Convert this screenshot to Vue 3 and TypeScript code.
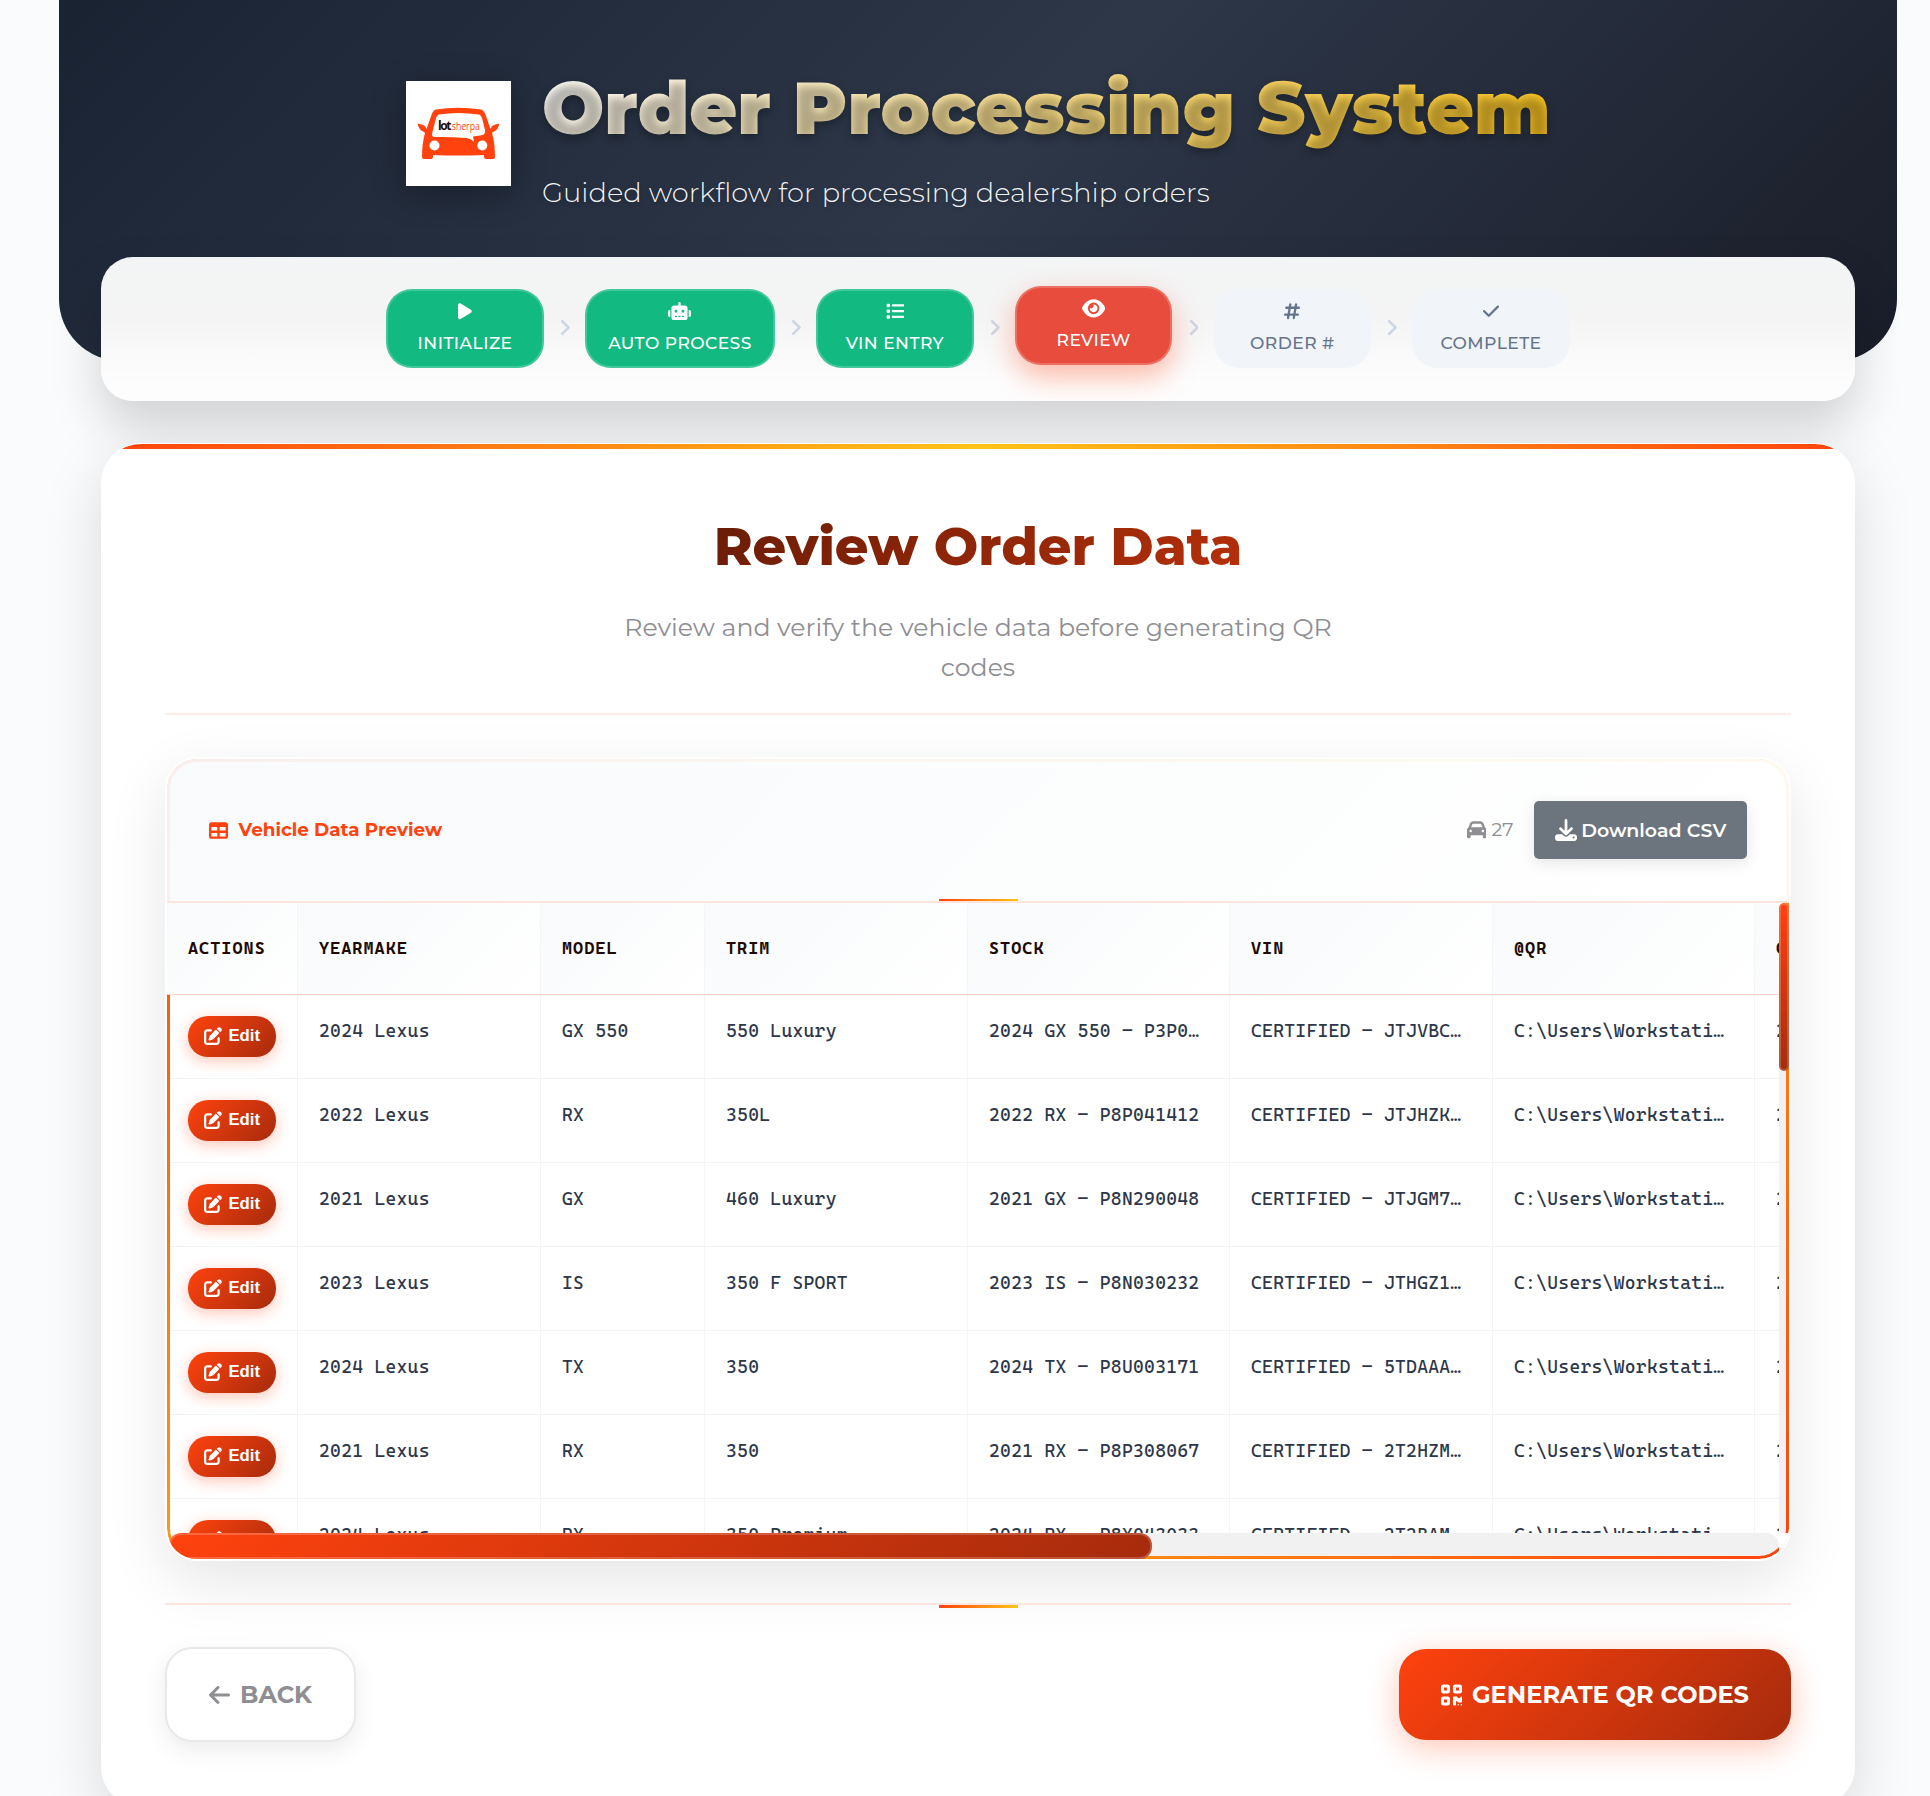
<script setup lang="ts">
interface Icon { w: number; d: string }
interface Step { label: string; icon: string; state: 'done' | 'active' | 'todo' }

const icons: Record<string, Icon> = {
  play: { w: 384, d: 'M73 39c-14.8-9.1-33.4-9.4-48.5-.9S0 62.6 0 80L0 432c0 17.4 9.4 33.4 24.5 41.9s33.7 8.1 48.5-.9L361 297c14.3-8.7 23-24.2 23-41s-8.7-32.2-23-41L73 39z' },
  robot: { w: 640, d: 'M320 0c17.7 0 32 14.3 32 32l0 64 120 0c39.8 0 72 32.2 72 72l0 272c0 39.8-32.2 72-72 72l-304 0c-39.8 0-72-32.2-72-72l0-272c0-39.8 32.2-72 72-72l120 0 0-64c0-17.7 14.3-32 32-32zM208 384c-8.8 0-16 7.2-16 16s7.2 16 16 16l32 0c8.8 0 16-7.2 16-16s-7.2-16-16-16l-32 0zm96 0c-8.8 0-16 7.2-16 16s7.2 16 16 16l32 0c8.8 0 16-7.2 16-16s-7.2-16-16-16l-32 0zm96 0c-8.8 0-16 7.2-16 16s7.2 16 16 16l32 0c8.8 0 16-7.2 16-16s-7.2-16-16-16l-32 0zM264 256a40 40 0 1 0 -80 0 40 40 0 1 0 80 0zm152 40a40 40 0 1 0 0-80 40 40 0 1 0 0 80zM48 224l16 0 0 192-16 0c-26.5 0-48-21.5-48-48l0-96c0-26.5 21.5-48 48-48zm544 0c26.5 0 48 21.5 48 48l0 96c0 26.5-21.5 48-48 48l-16 0 0-192 16 0z' },
  list: { w: 512, d: 'M40 48C26.7 48 16 58.7 16 72l0 48c0 13.3 10.7 24 24 24l48 0c13.3 0 24-10.7 24-24l0-48c0-13.3-10.7-24-24-24L40 48zM192 64c-17.7 0-32 14.3-32 32s14.3 32 32 32l288 0c17.7 0 32-14.3 32-32s-14.3-32-32-32L192 64zm0 160c-17.7 0-32 14.3-32 32s14.3 32 32 32l288 0c17.7 0 32-14.3 32-32s-14.3-32-32-32l-288 0zm0 160c-17.7 0-32 14.3-32 32s14.3 32 32 32l288 0c17.7 0 32-14.3 32-32s-14.3-32-32-32l-288 0zM16 232l0 48c0 13.3 10.7 24 24 24l48 0c13.3 0 24-10.7 24-24l0-48c0-13.3-10.7-24-24-24l-48 0c-13.3 0-24 10.7-24 24zM40 368c-13.3 0-24 10.7-24 24l0 48c0 13.3 10.7 24 24 24l48 0c13.3 0 24-10.7 24-24l0-48c0-13.3-10.7-24-24-24l-48 0z' },
  eye: { w: 576, d: 'M288 32c-80.8 0-145.5 36.8-192.6 80.6C48.6 156 17.3 208 2.5 243.7c-3.3 7.9-3.3 16.7 0 24.6C17.3 304 48.6 356 95.4 399.4C142.5 443.2 207.2 480 288 480s145.5-36.8 192.6-80.6c46.8-43.5 78.1-95.4 93-131.1c3.3-7.9 3.3-16.7 0-24.6c-14.9-35.7-46.2-87.7-93-131.1C433.5 68.8 368.8 32 288 32zM144 256a144 144 0 1 1 288 0 144 144 0 1 1 -288 0zm144-64c0 35.3-28.7 64-64 64c-7.1 0-13.9-1.2-20.3-3.3c-5.5-1.8-11.9 1.6-11.7 7.4c.3 6.9 1.3 13.8 3.2 20.7c13.7 51.2 66.4 81.6 117.6 67.9s81.6-66.4 67.9-117.6c-11.1-41.5-47.8-69.4-88.6-71.1c-5.8-.2-9.2 6.1-7.4 11.7c2.1 6.4 3.3 13.2 3.3 20.3z' },
  hash: { w: 448, d: 'M181.3 32.4c17.4 2.9 29.2 19.4 26.3 36.8L197.8 128l95.1 0 11.5-69.3c2.9-17.4 19.4-29.2 36.8-26.3s29.2 19.4 26.3 36.8L357.8 128l58.2 0c17.7 0 32 14.3 32 32s-14.3 32-32 32l-68.9 0L325.8 320l58.2 0c17.7 0 32 14.3 32 32s-14.3 32-32 32l-68.9 0-11.5 69.3c-2.9 17.4-19.4 29.2-36.8 26.3s-29.2-19.4-26.3-36.8l9.8-58.7-95.1 0-11.5 69.3c-2.9 17.4-19.4 29.2-36.8 26.3s-29.2-19.4-26.3-36.8L90.2 384 32 384c-17.7 0-32-14.3-32-32s14.3-32 32-32l68.9 0 21.3-128L64 192c-17.7 0-32-14.3-32-32s14.3-32 32-32l68.9 0 11.5-69.3c2.9-17.4 19.4-29.2 36.8-26.3zM187.1 192L165.8 320l95.1 0 21.3-128-95.1 0z' },
  check: { w: 448, d: 'M438.6 105.4c12.5 12.5 12.5 32.8 0 45.3l-256 256c-12.5 12.5-32.8 12.5-45.3 0l-128-128c-12.5-12.5-12.5-32.8 0-45.3s32.8-12.5 45.3 0L160 338.7 393.4 105.4c12.5-12.5 32.8-12.5 45.3 0z' },
  chevron: { w: 320, d: 'M310.6 233.4c12.5 12.5 12.5 32.8 0 45.3l-192 192c-12.5 12.5-32.8 12.5-45.3 0s-12.5-32.8 0-45.3L242.7 256 73.4 86.6c-12.5-12.5-12.5-32.8 0-45.3s32.8-12.5 45.3 0l192 192z' },
  table: { w: 512, d: 'M64 256l0-96 160 0 0 96L64 256zm0 64l160 0 0 96L64 416l0-96zm224 96l0-96 160 0 0 96-160 0zM448 256l-160 0 0-96 160 0 0 96zM64 32C28.7 32 0 60.7 0 96L0 416c0 35.3 28.7 64 64 64l384 0c35.3 0 64-28.7 64-64l0-320c0-35.3-28.7-64-64-64L64 32z' },
  car: { w: 512, d: 'M135.2 117.4L109.1 192l293.8 0-26.1-74.6C372.3 104.6 360.2 96 346.6 96L165.4 96c-13.6 0-25.7 8.6-30.2 21.4zM39.6 196.8L74.8 96.3C88.3 57.8 124.6 32 165.4 32l181.2 0c40.8 0 77.1 25.8 90.6 64.3l35.2 100.5c23.2 9.6 39.6 32.5 39.6 59.2l0 144 0 48c0 17.7-14.3 32-32 32l-32 0c-17.7 0-32-14.3-32-32l0-48L96 400l0 48c0 17.7-14.3 32-32 32l-32 0c-17.7 0-32-14.3-32-32l0-48L0 256c0-26.7 16.4-49.6 39.6-59.2zM128 288a32 32 0 1 0 -64 0 32 32 0 1 0 64 0zm288 32a32 32 0 1 0 0-64 32 32 0 1 0 0 64z' },
  download: { w: 512, d: 'M288 32c0-17.7-14.3-32-32-32s-32 14.3-32 32l0 242.7-73.4-73.4c-12.5-12.5-32.8-12.5-45.3 0s-12.5 32.8 0 45.3l128 128c12.5 12.5 32.8 12.5 45.3 0l128-128c12.5-12.5 12.5-32.8 0-45.3s-32.8-12.5-45.3 0L288 274.7 288 32zM64 352c-35.3 0-64 28.7-64 64l0 32c0 35.3 28.7 64 64 64l384 0c35.3 0 64-28.7 64-64l0-32c0-35.3-28.7-64-64-64l-101.5 0-45.3 45.3c-25 25-65.5 25-90.5 0L165.5 352 64 352zm368 56a24 24 0 1 1 0 48 24 24 0 1 1 0-48z' },
  edit: { w: 512, d: 'M471.6 21.7c-21.9-21.9-57.3-21.9-79.2 0L362.3 51.7l97.9 97.9 30.1-30.1c21.9-21.9 21.9-57.3 0-79.2L471.6 21.7zm-299.2 220c-6.1 6.1-10.8 13.6-13.5 21.9l-29.6 88.8c-2.9 8.6-.6 18.1 5.8 24.6s15.9 8.7 24.6 5.8l88.8-29.6c8.2-2.7 15.7-7.4 21.9-13.5L437.7 172.3 339.7 74.3 172.4 241.7zM96 64C43 64 0 107 0 160L0 416c0 53 43 96 96 96l256 0c53 0 96-43 96-96l0-96c0-17.7-14.3-32-32-32s-32 14.3-32 32l0 96c0 17.7-14.3 32-32 32L96 448c-17.7 0-32-14.3-32-32l0-256c0-17.7 14.3-32 32-32l96 0c17.7 0 32-14.3 32-32s-14.3-32-32-32L96 64z' },
  back: { w: 448, d: 'M9.4 233.4c-12.5 12.5-12.5 32.8 0 45.3l160 160c12.5 12.5 32.8 12.5 45.3 0s12.5-32.8 0-45.3L109.2 288 416 288c17.7 0 32-14.3 32-32s-14.3-32-32-32l-306.7 0L214.6 118.6c12.5-12.5 12.5-32.8 0-45.3s-32.8-12.5-45.3 0l-160 160z' },
  qr: { w: 448, d: 'M0 80C0 53.5 21.5 32 48 32l96 0c26.5 0 48 21.5 48 48l0 96c0 26.5-21.5 48-48 48l-96 0c-26.5 0-48-21.5-48-48L0 80zM64 96l0 64 64 0 0-64L64 96zM0 336c0-26.5 21.5-48 48-48l96 0c26.5 0 48 21.5 48 48l0 96c0 26.5-21.5 48-48 48l-96 0c-26.5 0-48-21.5-48-48l0-96zm64 16l0 64 64 0 0-64-64 0zM304 32l96 0c26.5 0 48 21.5 48 48l0 96c0 26.5-21.5 48-48 48l-96 0c-26.5 0-48-21.5-48-48l0-96c0-26.5 21.5-48 48-48zm80 64l-64 0 0 64 64 0 0-64zM256 304c0-8.8 7.2-16 16-16l64 0c8.8 0 16 7.2 16 16s7.2 16 16 16l32 0c8.8 0 16-7.2 16-16s7.2-16 16-16s16 7.2 16 16l0 96c0 8.8-7.2 16-16 16l-64 0c-8.8 0-16-7.2-16-16s-7.2-16-16-16s-16 7.2-16 16l0 64c0 8.8-7.2 16-16 16l-32 0c-8.8 0-16-7.2-16-16l0-160zM368 480a16 16 0 1 1 0-32 16 16 0 1 1 0 32zm64 0a16 16 0 1 1 0-32 16 16 0 1 1 0 32z' },
}
const vb = (n: string) => `0 0 ${icons[n].w} 512`

const steps: Step[] = [
  { label: 'INITIALIZE', icon: 'play', state: 'done' },
  { label: 'AUTO PROCESS', icon: 'robot', state: 'done' },
  { label: 'VIN ENTRY', icon: 'list', state: 'done' },
  { label: 'REVIEW', icon: 'eye', state: 'active' },
  { label: 'ORDER #', icon: 'hash', state: 'todo' },
  { label: 'COMPLETE', icon: 'check', state: 'todo' },
]

const columns = ['ACTIONS', 'YEARMAKE', 'MODEL', 'TRIM', 'STOCK', 'VIN', '@QR', 'C']
const path = 'C:\\Users\\Workstati…'
const rows: string[][] = [
  ['2024 Lexus', 'GX 550', '550 Luxury', '2024 GX 550 – P3P0…', 'CERTIFIED – JTJVBC…', path, '2'],
  ['2022 Lexus', 'RX', '350L', '2022 RX – P8P041412', 'CERTIFIED – JTJHZK…', path, '2'],
  ['2021 Lexus', 'GX', '460 Luxury', '2021 GX – P8N290048', 'CERTIFIED – JTJGM7…', path, '2'],
  ['2023 Lexus', 'IS', '350 F SPORT', '2023 IS – P8N030232', 'CERTIFIED – JTHGZ1…', path, '2'],
  ['2024 Lexus', 'TX', '350', '2024 TX – P8U003171', 'CERTIFIED – 5TDAAA…', path, '2'],
  ['2021 Lexus', 'RX', '350', '2021 RX – P8P308067', 'CERTIFIED – 2T2HZM…', path, '2'],
  ['2024 Lexus', 'RX', '350 Premium', '2024 RX – P8X043033', 'CERTIFIED – 2T2BAM…', path, '2'],
]
</script>

<template>
  <div class="page">
    <header class="hero">
      <svg class="logo" viewBox="0 0 105 105">
        <rect width="105" height="105" fill="#fff" />
        <path fill="#ff420e" d="M30 28.500Q52 25 75 28.500Q78 29 80 35L84.500 48L86 45Q89 43 93.300 42.500Q92.500 49 87 51L86 52Q89 62 89 76Q89 78 87 78H80Q78 78 78 76V74Q52 75 27 74V76Q27 78 25 78H18Q16 78 16 76Q16 62 19 52L18 51Q12.500 49 11.700 42.500Q16 43 19 45L20.500 48L25.500 34Q27 29 30 28.500Z" />
        <path fill="#fff" d="M33 33.500Q52 30.500 73 33.500Q75 34 76 37L79 49Q80 54 74 54.500L67 55.500L68 61Q65 57.500 60 57Q43 55.500 28 56Q26 56 26 53L30 37Q31 34 33 33.500Z" />
        <circle cx="28.500" cy="64.500" r="5" fill="#fff" /><circle cx="76.300" cy="64.500" r="5" fill="#fff" />
        <text x="32" y="48.500" class="lot" textLength="13.500">lot</text>
        <text x="45.800" y="48.500" class="sherpa" textLength="28" lengthAdjust="spacingAndGlyphs">sherpa</text>
      </svg>
      <div>
        <h1>Order Processing System</h1>
        <p>Guided workflow for processing dealership orders</p>
      </div>
    </header>

    <nav class="steps">
      <template v-for="(s, i) in steps" :key="s.label">
        <svg v-if="i" class="sep" viewBox="0 0 320 512"><path :d="icons.chevron.d" /></svg>
        <div class="step" :class="s.state">
          <svg :viewBox="vb(s.icon)"><path :d="icons[s.icon].d" /></svg>
          <span>{{ s.label }}</span>
        </div>
      </template>
    </nav>

    <main class="card">
      <div class="bar"></div>
      <section class="intro">
        <h2>Review Order Data</h2>
        <p>Review and verify the vehicle data before generating QR codes</p>
      </section>

      <section class="panel">
        <div class="panel-head">
          <svg class="ti" :viewBox="vb('table')"><path :d="icons.table.d" /></svg>
          <h3>Vehicle Data Preview</h3>
          <svg class="ci" :viewBox="vb('car')"><path :d="icons.car.d" /></svg>
          <span class="count">27</span>
          <button class="csv"><svg :viewBox="vb('download')"><path :d="icons.download.d" /></svg><span>Download CSV</span></button>
          <i class="accent"></i>
        </div>
        <div class="scroller">
          <div class="tr th"><div v-for="c in columns" :key="c" class="td">{{ c }}</div></div>
          <div v-for="(r, i) in rows" :key="i" class="tr">
            <div class="td act"><button class="edit"><svg :viewBox="vb('edit')"><path :d="icons.edit.d" /></svg><span>Edit</span></button></div>
            <div v-for="(v, j) in r" :key="j" class="td">{{ v }}</div>
          </div>
        </div>
        <div class="vtrack"></div>
        <div class="htrack"></div>
        <div class="ring"></div>
        <div class="corner"></div>
        <div class="vthumb"></div>
        <div class="hthumb"></div>
      </section>

      <footer class="actions">
        <i class="accent"></i>
        <button class="btn back"><svg :viewBox="vb('back')"><path :d="icons.back.d" /></svg><span>BACK</span></button>
        <button class="btn gen"><svg :viewBox="vb('qr')"><path :d="icons.qr.d" /></svg><span>GENERATE QR CODES</span></button>
      </footer>
    </main>
  </div>
</template>

<style>
body { margin: 0; background: #fafbfd; }
</style>

<style scoped>
* { box-sizing: border-box; }
.page { position: relative; height: 1796px; overflow: hidden; padding: 0 33px 0 59px; font-family: Montserrat, Inter, sans-serif; background: #fafbfd; }
svg { fill: currentColor; flex: none; }
h1, h2, h3, p { margin: 0; }
button { font-family: inherit; border: 0; padding: 0; }

.hero { height: 361px; border-radius: 0 0 62px 62px; background: linear-gradient(135deg, #1a2332 0%, #2d3748 50%, #1a1d29 100%); display: flex; align-items: flex-start; padding: 63px 0 0 347px; gap: 31px; }
.logo { width: 105px; height: 105px; margin-top: 18px; box-shadow: 0 8px 32px rgba(0, 0, 0, .3); }
.lot { font: 700 12px "Open Sans", sans-serif; fill: #200a03; }
.sherpa { font: 400 11px "Open Sans", sans-serif; fill: #ff420e; }
.hero h1 { font-size: 73.500px; line-height: 90px; font-weight: 900; white-space: nowrap; color: transparent; background: linear-gradient(135deg, #fff 0%, #fcc419 100%); -webkit-background-clip: text; background-clip: text; text-shadow: 0 4px 8px rgba(0, 0, 0, .3); }
.hero p { margin-top: 22px; font-size: 27.300px; line-height: 36px; font-weight: 300; color: rgba(255, 255, 255, .95); white-space: nowrap; text-shadow: 0 2px 4px rgba(0, 0, 0, .2); }

.steps { position: relative; margin: -104px 42px 0; height: 144px; border-radius: 32px; background: linear-gradient(#f3f4f5 0, #f4f4f4 40%, #fdfdfd 88%); box-shadow: 0 25px 50px rgba(0, 0, 0, .17); display: flex; align-items: center; justify-content: center; }
.step { width: 157.500px; height: 79px; border-radius: 26px; display: flex; flex-direction: column; align-items: center; font-size: 17.100px; letter-spacing: .45px; font-weight: 500; color: #64748b; background: #f1f5f9; white-space: nowrap; padding-top: 11px; margin-top: -1px; border: 2px solid transparent; }
.step:nth-of-type(2) { width: 190px; }
.step svg { height: 18.400px; }
.step span { line-height: 20px; margin-top: 12.600px; }
.done { background: #12b981; border-color: rgba(255, 255, 255, .2); color: #fff; background-clip: border-box; }
.active { background: #e84c3d; border-color: rgba(255, 255, 255, .2); color: #fff; transform: translateY(-3px); box-shadow: 0 12px 28px rgba(255, 66, 14, .35); }
.step.active svg { height: 20.700px; margin: -1px 0 -1.300px; }
.sep { width: 10.600px; height: 17px; margin: -3px 15.300px 0; color: #cbd5e1; stroke: currentColor; stroke-width: 16; }

.card { position: relative; margin: 42px 42px 0; height: 1364px; border-radius: 40px; background: #fff; padding: 1px 64px 0; box-shadow: 0 20px 60px rgba(0, 0, 0, .13); }
.bar { margin: 0 -64px; height: 40px; border-radius: 40px 40px 0 0; background: linear-gradient(90deg, #ff420e, #fcc419, #ff420e) top / 100% 5px no-repeat; }
.intro { height: 231px; border-bottom: 2px solid #feece7; text-align: center; padding-top: 30px; }
h2 { font-size: 52.600px; line-height: 64px; font-weight: 800; color: transparent; background: linear-gradient(135deg, #200a03, #ff420e); -webkit-background-clip: text; background-clip: text; }
.intro p { width: 720px; margin: 29px auto 0; font-size: 25.200px; line-height: 40px; color: #8e8e93; }

.panel { position: relative; margin-top: 42px; height: 804px; border: 2px solid #fff; border-radius: 32px; overflow: hidden; background: #fff; box-shadow: 0 20px 60px rgba(0, 0, 0, .1); }
.panel-head { position: relative; z-index: 3; height: 144px; border-bottom: 2px solid #fde4dd; display: flex; align-items: center; padding: 0 42px; background: linear-gradient(135deg, rgba(248, 250, 251, .94), rgba(255, 255, 255, .94)); }
.ti { width: 19px; height: 19px; color: #ff420e; margin-right: 10.500px; }
h3 { font-size: 18.350px; font-weight: 700; color: #ff420e; flex: 1; margin-top: -2px; }
.ci { width: 19.500px; height: 19.500px; color: #8e8e93; margin-top: -1px; }
.count { font-size: 19px; color: #8e8e93; margin: -2px 20.500px 0 5.500px; }
.csv { width: 213px; height: 58px; border-radius: 5px; background: #6c757d; color: #fff; display: flex; align-items: center; justify-content: center; gap: 4.500px; font-size: 19px; font-weight: 600; box-shadow: 0 4px 15px rgba(0, 0, 0, .1); }
.csv svg { width: 22px; height: 22px; }
.accent { position: absolute; left: calc(50% - 39px); bottom: 0; width: 79px; height: 2px; background: linear-gradient(90deg, #ff420e, #fcc419); }

.scroller { position: relative; height: 630px; width: 1612px; overflow: hidden; }
.tr { display: grid; grid-template-columns: 131px 243px 164px 263px 262px 263px 262px 262px; width: 1850px; height: 84px; border-bottom: 1px solid #f2f3f5; font-family: "Cascadia Code", "JetBrains Mono", "DejaVu Sans Mono", monospace; font-size: 18.400px; letter-spacing: .3px; color: #2d3748; }
.td { border-right: 1px solid #f4f5f7; padding: 24px 0 0 21px; line-height: 24px; white-space: nowrap; }
.th { position: relative; z-index: 3; height: 92px; border-bottom: 1px solid #ffd3c8; font-weight: 700; font-size: 17.250px; letter-spacing: 1px; color: #200a03; }
.th .td { padding-top: 33px; background: linear-gradient(135deg, #f8fafb, #fff); }
.td.act { padding-top: 21px; }
.edit { width: 88px; height: 41px; border-radius: 20px; display: flex; align-items: center; justify-content: center; gap: 6.500px; color: #fff; background: linear-gradient(135deg, #ff420e, #a62b0c); font: 700 16.800px "Liberation Sans", sans-serif; letter-spacing: 0; box-shadow: 0 4px 15px rgba(255, 66, 14, .3); }
.edit svg { width: 18px; height: 18px; margin-top: -2px; }
.edit span { margin-top: -2px; }

.vtrack { position: absolute; right: 0; top: 144px; width: 10px; height: 630px; background: #f1f1f1; border-radius: 5px; }
.htrack { position: absolute; left: 0; bottom: 0; width: 1612px; height: 26px; background: #f1f1f1; border-radius: 13px; }
.ring { position: absolute; inset: 0; border-radius: 30px; padding: 3px; z-index: 1; background: linear-gradient(135deg, #ff420e, #fcc419, #ff420e); -webkit-mask: linear-gradient(#000 0 0) content-box exclude, linear-gradient(#000 0 0); mask: linear-gradient(#000 0 0) content-box exclude, linear-gradient(#000 0 0); }
.corner { position: absolute; z-index: 2; right: 0; bottom: 0; width: 10px; height: 26px; background: #fff; }
.vthumb { position: absolute; z-index: 2; right: 0; top: 144px; width: 10px; height: 168px; border-radius: 5px; background: linear-gradient(#ff420e, #a62b0c) border-box; border: 2px solid rgba(255, 255, 255, .2); }
.hthumb { position: absolute; z-index: 2; left: 2px; bottom: 0; width: 983px; height: 26px; border-radius: 12px; background: linear-gradient(135deg, #ff420e, #a62b0c) border-box; border: 2px solid rgba(255, 255, 255, .2); }

.actions { position: relative; margin-top: 42px; border-top: 2px solid #fbe5df; display: flex; justify-content: space-between; align-items: flex-start; padding-top: 42px; }
.actions .accent { bottom: auto; top: 0; height: 3px; }
.btn { height: 94px; border-radius: 27px; display: flex; align-items: center; justify-content: center; gap: 10px; font-size: 24.100px; font-weight: 700; }
.back { width: 191px; height: 95px; background: #fff; border: 2px solid #e8e8e8; color: #8e8e93; box-shadow: 0 8px 25px rgba(0, 0, 0, .08); }
.gen { width: 392px; height: 91px; color: #fff; background: linear-gradient(135deg, #ff420e, #a62b0c); box-shadow: 0 8px 32px rgba(255, 66, 14, .3); margin-top: 2px; }
.btn svg { height: 24px; }
</style>
